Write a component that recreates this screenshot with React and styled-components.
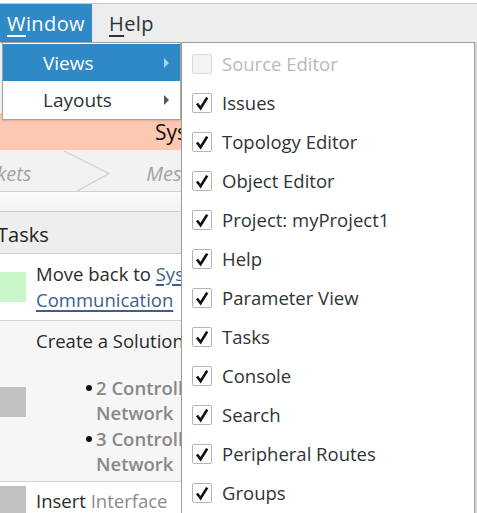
import React from 'react'
import styled, { createGlobalStyle } from 'styled-components'

const GlobalStyle = createGlobalStyle`
    body{
        margin: 0;
        background: #ffffff;
        font-family: "Open Sans", "Noto Sans", sans-serif;
        color: #2e3436;
        overflow: hidden;
    }
`

const views = [
    { label: 'Source Editor', checked: false, disabled: true },
    { label: 'Issues', checked: true },
    { label: 'Topology Editor', checked: true },
    { label: 'Object Editor', checked: true },
    { label: 'Project: myProject1', checked: true },
    { label: 'Help', checked: true },
    { label: 'Parameter View', checked: true },
    { label: 'Tasks', checked: true },
    { label: 'Console', checked: true },
    { label: 'Search', checked: true },
    { label: 'Peripheral Routes', checked: true },
    { label: 'Groups', checked: true },
]

const Arrow = ({ color }) => (
    <svg width="7" height="10" viewBox="0 0 7 10">
        <path d="M1 0 L6 5 L1 10 Z" fill={color} />
    </svg>
)

const Check = () => (
    <svg width="18" height="18" viewBox="0 0 18 18">
        <path d="M4 9.5 L7.6 14.2 L14.2 3.6" fill="none" stroke="#111" strokeWidth="2.7" strokeLinecap="butt" strokeLinejoin="miter" />
    </svg>
)

const App = () => {
    return (
        <Page>
            <GlobalStyle />
            <MenuBar>
                <MenuTitle $active><u>W</u>indow</MenuTitle>
                <MenuTitle><u>H</u>elp</MenuTitle>
            </MenuBar>

            <Hidden />
            <Banner>System Communication</Banner>
            <Crumbs>
                <Crumb $first>Sockets</Crumb>
                <svg width="50" height="41" viewBox="0 0 50 41" style={{ flexShrink: 0 }}>
                    <path d="M3 1 L48 23.5 L16 41" fill="none" stroke="#cfcfcf" strokeWidth="1.3" />
                </svg>
                <Crumb>Messages</Crumb>
            </Crumbs>
            <Spacer />
            <TasksHeader>Tasks</TasksHeader>

            <TaskRow>
                <Marker $color="#c9f7c9" />
                <TaskText>
                    Move back to <Link>System</Link><br />
                    <Link>Communication</Link>
                </TaskText>
            </TaskRow>
            <TaskRow $shaded>
                <Marker $color="#c2c2c2" />
                <TaskText>
                    Create a Solution
                    <Bullets>
                        <li><span>2 Controllers in<br />Network</span></li>
                        <li><span>3 Controllers in<br />Network</span></li>
                    </Bullets>
                </TaskText>
            </TaskRow>
            <TaskRow $last>
                <Marker $color="#c2c2c2" />
                <TaskText>
                    Insert <Muted>Interface</Muted>
                </TaskText>
            </TaskRow>

            <Dropdown>
                <DropItem $active>
                    <span>Views</span>
                    <Arrow color="#a9d0ee" />
                </DropItem>
                <DropItem>
                    <span>Layouts</span>
                    <Arrow color="#555" />
                </DropItem>
            </Dropdown>

            <SubMenu>
                {views.map(v => (
                    <ViewRow key={v.label} $disabled={v.disabled}>
                        <Box $disabled={v.disabled}>{v.checked && <Check />}</Box>
                        {v.label}
                    </ViewRow>
                ))}
            </SubMenu>
        </Page>
    )
}

const Page = styled.div`
    position: relative;
    width: 477px;
    height: 513px;
    overflow: hidden;
`

const MenuBar = styled.div`
    display: flex;
    align-items: stretch;
    margin-top: 3px;
    height: 38px;
    background: #ededed;
    border-top: 1px solid #c6c6c6;
    border-bottom: 1px solid #b9b9b9;
    font-size: 20px;
    gap: 10px;
`

const MenuTitle = styled.div`
    display: flex;
    align-items: center;
    padding: 0 8px 0 7px;
    width: ${p => p.$active ? '77px' : 'auto'};
    background: ${p => p.$active ? '#3089c7' : 'transparent'};
    color: ${p => p.$active ? '#ffffff' : '#2e3436'};
    letter-spacing: 0.4px;
    u{
        text-decoration-thickness: 1.5px;
        text-underline-offset: 4px;
    }
`

const Hidden = styled.div`
    height: 70px;
    background: #f6f6f6;
`

const Banner = styled.div`
    height: 37px;
    box-sizing: border-box;
    padding: 6px 0 0 155px;
    background: #fdc8b1;
    color: #111;
    font-size: 21px;
    line-height: 26px;
    white-space: nowrap;
`

const Crumbs = styled.div`
    display: flex;
    align-items: center;
    height: 41px;
    background: #f2f2f2;
    border-bottom: 1px solid #cfcfcf;
    overflow: hidden;
    white-space: nowrap;
`

const Crumb = styled.span`
    font-size: 20px;
    font-style: italic;
    color: #a3a3a3;
    padding-top: 6px;
    margin-left: ${p => p.$first ? '-34px' : '35px'};
    margin-right: ${p => p.$first ? '30px' : '0'};
`

const Spacer = styled.div`
    height: 19px;
    background: linear-gradient(#fbfbfb, #f3f3f3);
    border-bottom: 1px solid #cdcdcd;
`

const TasksHeader = styled.div`
    height: 42px;
    display: flex;
    align-items: center;
    padding: 3px 0 0;
    box-sizing: border-box;
    text-indent: -3px;
    background: #eeeeee;
    border-bottom: 1px solid #cdcdcd;
    font-size: 20px;
    color: #222;
`

const TaskRow = styled.div`
    display: grid;
    grid-template-columns: 26px 1fr;
    column-gap: 10px;
    align-items: center;
    padding: ${p => p.$last ? '4px 0 20px' : p.$shaded ? '7px 0 5px' : '7px 0 7px'};
    background: ${p => p.$shaded ? '#f6f6f6' : '#ffffff'};
    border-bottom: 1px solid #d2d2d2;
`

const Marker = styled.div`
    width: 26px;
    height: 30px;
    background: ${p => p.$color};
`

const TaskText = styled.div`
    font-size: 18.5px;
    line-height: 26px;
    color: #2a2a2a;
    white-space: nowrap;
`

const Link = styled.span`
    color: #3d5f8e;
    text-decoration: underline;
    text-decoration-thickness: 1.5px;
    text-underline-offset: 3px;
    font-weight: 500;
`

const Muted = styled.span`
    color: #8a8a8a;
`

const Bullets = styled.ul`
    margin: 21px 0 0;
    padding: 0 0 0 50px;
    list-style: none;
    li{
        display: grid;
        grid-template-columns: 10px auto;
        line-height: 25.3px;
        color: #888;
        font-weight: 600;
    }
    li::before{
        content: '';
        width: 6px;
        height: 6px;
        margin-top: 10px;
        border-radius: 50%;
        background: #111;
    }
`

const Dropdown = styled.div`
    position: absolute;
    top: 42px;
    left: 2px;
    width: 179px;
    box-sizing: border-box;
    padding: 1px 0;
    background: #ffffff;
    border: 1px solid #a3a3a3;
    box-shadow: 0 1px 2px rgba(0,0,0,0.15);
    font-size: 19px;
`

const DropItem = styled.div`
    display: flex;
    align-items: center;
    justify-content: space-between;
    height: 37px;
    padding: 0 10px 0 40px;
    background: ${p => p.$active ? '#3089c7' : 'transparent'};
    color: ${p => p.$active ? '#ffffff' : '#2e3436'};
`

const SubMenu = styled.div`
    position: absolute;
    top: 42px;
    left: 181px;
    width: 294px;
    height: 472px;
    box-sizing: border-box;
    padding-top: 1px;
    background: #ffffff;
    border: 1px solid #9c9c9c;
    box-shadow: 2px 0 0 #d6d6d6;
    font-size: 18.5px;
`

const ViewRow = styled.div`
    display: flex;
    align-items: center;
    gap: 10px;
    height: 39px;
    padding-left: 10px;
    color: ${p => p.$disabled ? '#b9b9b9' : '#2e3436'};
`

const Box = styled.div`
    width: 20px;
    height: 20px;
    box-sizing: border-box;
    display: flex;
    align-items: center;
    justify-content: center;
    border: 1px solid ${p => p.$disabled ? '#d9d9d9' : '#b5b5b5'};
    border-radius: 2px;
    background: ${p => p.$disabled ? '#f3f3f3' : '#ffffff'};
`

export default App
